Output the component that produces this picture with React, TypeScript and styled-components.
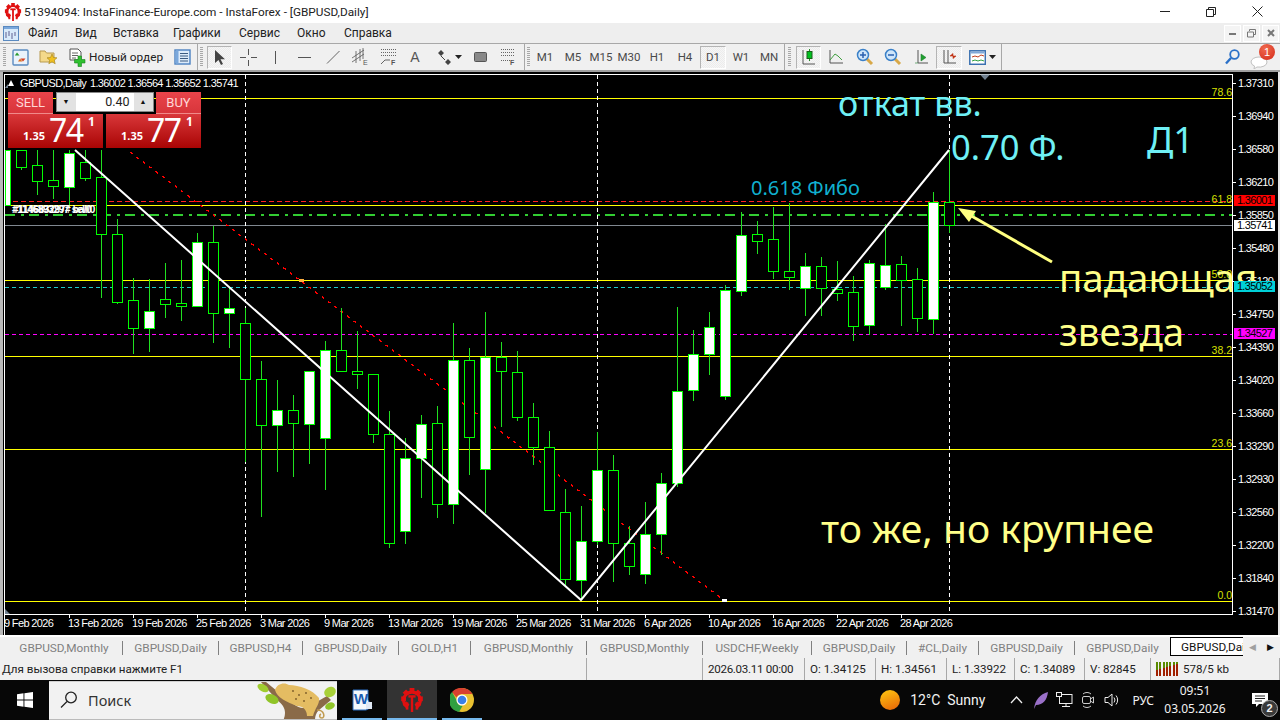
import React from "react";
import styled, { createGlobalStyle } from "styled-components";

const GlobalStyle = createGlobalStyle`
  html, body {
    margin: 0;
    width: 1280px;
    height: 720px;
    overflow: hidden;
    background: #f0f0f0;
    font-family: "Roboto", sans-serif;
  }
`;

const Page = styled.div`
  width: 1280px;
  height: 720px;
  display: flex;
  flex-direction: column;
`;

// Title bar
const TitleBar = styled.div`
  height: 23px;
  background: #fff;
  display: flex;
  align-items: center;
  padding-left: 4px;
  flex: none;
`;
const TitleText = styled.div`
  margin-left: 2px;
  font: 11.8px Roboto, sans-serif;
  color: #222;
  flex: 1;
`;
const WinButtons = styled.div`
  display: flex;
  width: 138px;
  height: 23px;
`;
const WinButton = styled.div`
  width: 46px;
  display: flex;
  align-items: center;
  justify-content: center;
`;

// Menu
const MenuBar = styled.div`
  height: 20px;
  background: #eeeeee;
  display: flex;
  align-items: center;
  flex: none;
  border-bottom: 1px solid #a8a8a8;
`;
const MenuIcon = styled.div`
  width: 28px;
  padding-left: 3px;
  box-sizing: border-box;
  display: flex;
`;
const MenuItem = styled.span<{ $w: number }>`
  width: ${(p) => p.$w}px;
  font: 12px Roboto, sans-serif;
  color: #222;
  flex: none;
`;
const MdiButtons = styled.div`
  margin-left: auto;
  margin-right: 1px;
  display: flex;
  gap: 2px;
`;
const MdiButton = styled.div`
  width: 15px;
  height: 15px;
  background: #f4f4f4;
  border: 1px solid #fff;
  display: flex;
  align-items: center;
  justify-content: center;
`;

// Toolbar
const ToolBar = styled.div`
  height: 28px;
  background: #f0f0f0;
  border-bottom: 2px solid #a0a0a0;
  display: flex;
  align-items: center;
  flex: none;
  padding-left: 3px;
  box-sizing: border-box;
`;
const Grip = styled.div<{ $gap: number }>`
  width: 3px;
  height: 20px;
  margin-right: ${(p) => p.$gap}px;
  flex: none;
  background: repeating-linear-gradient(to bottom, #a8a8a8 0 1px, transparent 1px 2px);
`;
const Divider = styled.div<{ $l: number; $r: number }>`
  width: 1px;
  height: 26px;
  background: #a8a8a8;
  margin: 0 ${(p) => p.$r}px 0 ${(p) => p.$l}px;
  flex: none;
`;
const ToolButton = styled.div<{ $w?: number; $on?: boolean }>`
  width: ${(p) => p.$w ?? 28}px;
  height: 23px;
  box-sizing: border-box;
  flex: none;
  display: flex;
  align-items: center;
  justify-content: center;
  font: 11.5px Roboto, sans-serif;
  color: #4a4a4a;
  gap: 3px;
  ${(p) =>
    p.$on
      ? `border: 1px solid #b4b4b4; border-right-color:#fff; border-bottom-color:#fff;
         background: repeating-conic-gradient(#f6f6f6 0 25%, #ececec 0 50%) 0 0 / 2px 2px;`
      : ""}
`;
const TimeFrameOn = styled(ToolButton)`
  margin: 0 1px;
`;
const OrderButton = styled(ToolButton)`
  justify-content: flex-start;
  padding-left: 5px;
`;
const OrderLabel = styled.span`
  font: 11.8px Roboto, sans-serif;
  color: #222;
`;
const TextTool = styled(ToolButton)`
  font: 14px "Liberation Sans", sans-serif;
  color: #555;
`;
const ToolbarEnd = styled.div`
  margin-left: auto;
  display: flex;
  align-items: center;
  gap: 10px;
  padding-right: 6px;
`;
const ChatWrap = styled.div`
  position: relative;
  width: 24px;
  height: 24px;
  display: flex;
  align-items: flex-end;
`;
const ChatBadge = styled.div`
  position: absolute;
  right: -1px;
  top: -1px;
  width: 16px;
  height: 16px;
  border-radius: 50%;
  background: radial-gradient(circle at 40% 30%, #f06a50, #d42a18);
  color: #fff;
  font: 11px/16px "Liberation Sans", sans-serif;
  text-align: center;
`;

// Chart
const ChartArea = styled.div`
  height: 563px;
  background: #000;
  position: relative;
  flex: none;
`;
const LeftEdge = styled.div`
  position: absolute;
  left: 0;
  top: 0;
  bottom: 0;
  width: 3px;
  background: #b8b8b8;
`;
const RightEdge = styled.div`
  position: absolute;
  right: 0;
  top: 0;
  bottom: 0;
  width: 2px;
  background: #e8e8e8;
`;
const BigNote = styled.div<{ $x: number; $y: number; $c: string; $s: number }>`
  position: absolute;
  left: ${(p) => p.$x}px;
  top: ${(p) => p.$y}px;
  color: ${(p) => p.$c};
  font: ${(p) => p.$s}px/1 "Noto Sans", sans-serif;
  white-space: nowrap;
`;
const PriceTag = styled.div<{ $y: number; $bg: string }>`
  position: absolute;
  left: 1234px;
  top: ${(p) => p.$y}px;
  width: 41px;
  height: 11px;
  background: ${(p) => p.$bg};
  color: #000;
  font: 11px/11px "Liberation Sans", sans-serif;
  letter-spacing: -0.65px;
  text-align: center;
`;

// One click trading panel
const TradePanel = styled.div`
  position: absolute;
  left: 8px;
  top: 20px;
  width: 193px;
  display: flex;
  flex-direction: column;
`;
const TradeTop = styled.div`
  background: linear-gradient(#e9444a, #d8353b);
  width: 45px;
  flex: none;
  color: #ffd7d7;
  font: 13px/21px Roboto, sans-serif;
  text-align: center;
  box-sizing: border-box;
  border-bottom: 1px solid #f08a8a;
  height: 22px;
`;
const TopRow = styled.div`
  display: flex;
  height: 22px;
  justify-content: space-between;
`;
const Spinner = styled.div`
  width: 98px;
  height: 20px;
  background: #d8d8d8;
  border: 1px solid #888;
  box-sizing: border-box;
  display: flex;
`;
const SpinArrow = styled.div`
  width: 19px;
  font-size: 7px;
  line-height: 18px;
  text-align: center;
  color: #111;
  background: #e2e2e2;
`;
const SpinValue = styled.div`
  flex: 1;
  background: #fff;
  color: #222;
  font: 12.5px/18px Roboto, sans-serif;
  text-align: right;
  padding-right: 4px;
`;
const PriceRow = styled.div`
  display: flex;
  gap: 3px;
`;
const PriceButton = styled.div`
  width: 95px;
  height: 34px;
  background: linear-gradient(#d9373a, #a90404);
  color: #fff;
  position: relative;
  font-family: "Noto Sans", sans-serif;
`;
const PriceSmall = styled.span`
  position: absolute;
  left: 15px;
  top: 15px;
  font-size: 11px;
  font-weight: 700;
  line-height: 14px;
`;
const PriceBig = styled.span`
  position: absolute;
  left: 41px;
  top: -3px;
  font-size: 32px;
  line-height: 38px;
  letter-spacing: -1.5px;
`;
const PriceSup = styled.span`
  position: absolute;
  left: 80px;
  top: 1px;
  font-size: 12px;
  line-height: 14px;
  font-weight: 700;
`;

// Tabs
const TabStrip = styled.div`
  height: 23px;
  box-sizing: border-box;
  background: #f0f0f0;
  border-top: 2px solid #fff;
  display: flex;
  align-items: center;
  position: relative;
  padding-left: 6px;
  flex: none;
  overflow: hidden;
`;
const Tab = styled.div<{ $w: number }>`
  width: ${(p) => p.$w}px;
  box-sizing: border-box;
  height: 14px;
  font: 11.8px/14px Roboto, sans-serif;
  color: #808080;
  border-right: 1px solid #808080;
  text-align: center;
  flex: none;
  white-space: nowrap;
`;
const ActiveTab = styled.div`
  position: absolute;
  left: 1170px;
  top: 0;
  width: 90px;
  height: 19px;
  background: #fff;
  border: 1px solid #000;
  border-right: 0;
  box-sizing: border-box;
  padding-left: 10px;
  font: 11.8px/18px Roboto, sans-serif;
  color: #111;
  white-space: nowrap;
  overflow: hidden;
`;
const TabArrows = styled.div`
  position: absolute;
  right: 0;
  top: 0;
  width: 37px;
  height: 20px;
  background: #f0f0f0;
  display: flex;
  align-items: center;
  justify-content: space-around;
  font-size: 9px;
`;
const ArrowGlyph = styled.span<{ $dim?: boolean }>`
  color: ${(p) => (p.$dim ? "#a0a0a0" : "#111")};
`;

// Status bar
const StatusBar = styled.div`
  height: 22px;
  background: #f0f0f0;
  display: flex;
  flex: none;
  font: 11.6px/22px Roboto, sans-serif;
  color: #222;
`;
const StatusCell = styled.div<{ $w: number }>`
  width: ${(p) => p.$w}px;
  flex: none;
  box-sizing: border-box;
  padding-left: 5px;
  border-right: 1px solid #a8a8a8;
  white-space: nowrap;
  display: flex;
  align-items: center;
  gap: 4px;
`;
const StatusFirst = styled(StatusCell)`
  padding-left: 2px;
`;
const StatusDate = styled(StatusCell)`
  letter-spacing: -0.3px;
`;

// Taskbar
const TaskBar = styled.div`
  height: 40px;
  background: #070707;
  display: flex;
  align-items: center;
  flex: none;
  color: #f2f2f2;
`;
const StartButton = styled.div`
  width: 49px;
  height: 40px;
  display: flex;
  align-items: center;
  justify-content: center;
`;
const SearchBox = styled.div`
  width: 288px;
  height: 39px;
  background: #f2f2f2;
  display: flex;
  align-items: center;
  padding-left: 11px;
  box-sizing: border-box;
  position: relative;
  border-top: 1px solid #d0d0d0;
  border-bottom: 1px solid #bbb;
  overflow: hidden;
`;
const SearchText = styled.span`
  margin-left: 10px;
  font: 14.5px "Noto Sans", sans-serif;
  color: #333;
`;
const Leopard = styled.div`
  position: absolute;
  right: 0;
  top: 0;
  height: 39px;
`;
const TaskApp = styled.div<{ $on?: boolean }>`
  width: 50px;
  height: 40px;
  box-sizing: border-box;
  display: flex;
  align-items: center;
  justify-content: center;
  position: relative;
  background: ${(p) => (p.$on ? "#333" : "transparent")};
  &::after {
    content: "";
    position: absolute;
    left: ${(p) => (p.$on ? 0 : 5)}px;
    right: ${(p) => (p.$on ? 0 : 5)}px;
    bottom: 0;
    height: 2px;
    background: #76b9ed;
  }
`;
const Tray = styled.div`
  margin-left: auto;
  display: flex;
  align-items: center;
  height: 40px;
`;
const Weather = styled.div`
  display: flex;
  align-items: center;
  gap: 10px;
  font: 14px Roboto, sans-serif;
  margin-right: 19px;
`;
const TrayIcon = styled.div`
  width: 24px;
  display: flex;
  justify-content: center;
`;
const Lang = styled.div`
  font: 12px "Noto Sans", sans-serif;
  margin: 0 10px 0 8px;
`;
const Clock = styled.div`
  width: 62px;
  font: 12px/18px "Noto Sans", sans-serif;
  text-align: center;
  margin-right: 14px;
`;
const Notify = styled.div`
  width: 40px;
  position: relative;
  display: flex;
  justify-content: center;
`;
const NotifyBadge = styled.div`
  position: absolute;
  left: 21px;
  top: 7px;
  width: 15px;
  height: 15px;
  border-radius: 50%;
  border: 1px solid #aaa;
  background: #3a3a3a;
  font: bold 11px/15px "Liberation Sans", sans-serif;
  text-align: center;
`;

// [x center, wick top, wick bottom, body top, body bottom, bullish]
type Candle = [number, number, number, number, number, number];
const candles: Candle[] = [
  [21, 150, 170, 150, 167, 0], [37, 150, 195, 165, 181, 0], [53, 150, 199, 180, 186, 0],
  [69, 150, 207, 153, 187, 1], [85, 150, 181, 162, 178, 0], [101, 150, 298, 177, 234, 0],
  [117, 219, 304, 234, 302, 0], [133, 278, 354, 300, 328, 0], [149, 279, 352, 311, 328, 1],
  [165, 263, 318, 299, 304, 0], [181, 260, 321, 303, 306, 0], [197, 233, 306, 242, 306, 1],
  [213, 226, 343, 242, 313, 0], [229, 287, 348, 308, 313, 1], [245, 308, 462, 323, 379, 0],
  [261, 361, 517, 379, 425, 0], [277, 380, 472, 410, 425, 1], [293, 395, 477, 410, 423, 0],
  [309, 371, 464, 371, 424, 1], [325, 341, 490, 350, 438, 1], [341, 308, 372, 350, 371, 0],
  [357, 331, 389, 371, 374, 0], [373, 374, 443, 374, 434, 0], [389, 411, 548, 434, 543, 0],
  [405, 438, 544, 458, 531, 1], [421, 415, 498, 424, 458, 1], [437, 406, 518, 423, 504, 0],
  [453, 323, 524, 360, 504, 1], [469, 348, 475, 360, 437, 0], [485, 312, 513, 357, 469, 1],
  [501, 342, 427, 357, 371, 0], [517, 351, 421, 372, 417, 0], [533, 403, 465, 417, 447, 0],
  [549, 431, 510, 447, 510, 0], [565, 489, 586, 512, 579, 0], [581, 506, 600, 541, 580, 1],
  [597, 432, 545, 470, 541, 1], [613, 455, 582, 470, 543, 0], [629, 526, 575, 543, 566, 0],
  [645, 502, 584, 534, 574, 1], [661, 473, 555, 483, 534, 1], [677, 307, 487, 391, 483, 1],
  [693, 330, 401, 354, 390, 1], [709, 312, 375, 327, 354, 1], [725, 285, 400, 290, 396, 1],
  [741, 212, 296, 235, 291, 1], [757, 221, 254, 234, 241, 0], [773, 207, 279, 239, 271, 0],
  [789, 203, 290, 271, 277, 0], [805, 253, 316, 266, 288, 1], [821, 257, 316, 266, 288, 0],
  [837, 261, 301, 289, 293, 0], [853, 276, 341, 292, 326, 0], [869, 260, 335, 263, 325, 1],
  [885, 224, 290, 265, 287, 1], [901, 256, 326, 264, 280, 0], [917, 268, 332, 279, 318, 0],
  [933, 192, 334, 202, 319, 1], [949, 150, 233, 202, 225, 0],
];

const prices: [string, number][] = [
  ["1.37310", 83], ["1.36940", 116], ["1.36580", 149], ["1.36210", 182], ["1.35850", 215],
  ["1.35480", 248], ["1.35120", 281], ["1.34750", 314], ["1.34390", 347], ["1.34020", 380],
  ["1.33660", 413], ["1.33290", 446], ["1.32930", 479], ["1.32560", 512], ["1.32200", 545],
  ["1.31840", 578], ["1.31470", 611],
];

const dates: [string, number][] = [
  ["9 Feb 2026", 5], ["13 Feb 2026", 69], ["19 Feb 2026", 133], ["25 Feb 2026", 197],
  ["3 Mar 2026", 261], ["9 Mar 2026", 325], ["13 Mar 2026", 389], ["19 Mar 2026", 453],
  ["25 Mar 2026", 517], ["31 Mar 2026", 581], ["6 Apr 2026", 645], ["10 Apr 2026", 709],
  ["16 Apr 2026", 773], ["22 Apr 2026", 837], ["28 Apr 2026", 901],
];

const fibo: [string, number][] = [
  ["78.6", 98], ["61.8", 205], ["50.0", 280], ["38.2", 356], ["23.6", 449], ["0.0", 601],
];

const tabs: [string, number][] = [
  ["GBPUSD,Monthly", 117], ["GBPUSD,Daily", 96], ["GBPUSD,H4", 84], ["GBPUSD,Daily", 96],
  ["GOLD,H1", 72], ["GBPUSD,Monthly", 116], ["GBPUSD,Monthly", 116], ["USDCHF,Weekly", 109],
  ["GBPUSD,Daily", 95], ["#CL,Daily", 72], ["GBPUSD,Daily", 96], ["GBPUSD,Daily", 96],
];

const menus: [string, number][] = [
  ["Файл", 47], ["Вид", 38], ["Вставка", 60], ["Графики", 66], ["Сервис", 58], ["Окно", 47], ["Справка", 60],
];

const frames = ["M1", "M5", "M15", "M30", "H1", "H4", "D1", "W1", "MN"];

const ChartSvg = () => (
  <svg width={1280} height={563} viewBox="0 72 1280 563" style={{ display: "block" }}>
    <g shapeRendering="crispEdges">
      <path d="M4.5 635V74.5H1232.5V614.5H4.5" fill="none" stroke="#fff" />
      {fibo.map(([, y]) => (
        <line key={y} x1={5} x2={1232} y1={y + 0.5} y2={y + 0.5} stroke="#ffff00" />
      ))}
      <line x1={5} x2={1232} y1={201.5} y2={201.5} stroke="#ff2020" strokeDasharray="5 3" />
      <line x1={5} x2={1232} y1={225.5} y2={225.5} stroke="#808890" />
      <line x1={5} x2={1232} y1={287.5} y2={287.5} stroke="#20c8c8" strokeDasharray="4 3" />
      <line x1={5} x2={1232} y1={334.5} y2={334.5} stroke="#ff00ff" strokeDasharray="4 3" />
      <line x1={5} x2={1232} y1={215} y2={215} stroke="#32cd32" strokeWidth={2} strokeDasharray="10 6 3 5" />
      {[245, 597, 949].map((x) => (
        <line key={x} x1={x + 0.5} x2={x + 0.5} y1={75} y2={614} stroke="#fff" strokeDasharray="4 3" />
      ))}
      {prices.map(([, y]) => (
        <line key={y} x1={1232} x2={1236} y1={y + 0.5} y2={y + 0.5} stroke="#fff" />
      ))}
      {dates.slice(1).map(([, x]) => (
        <line key={x} x1={x + 0.5} x2={x + 0.5} y1={614} y2={618} stroke="#fff" />
      ))}
      <line x1={130} y1={152} x2={725} y2={601} stroke="#ff0000" strokeWidth={1.4} strokeDasharray="3 5" />
      <rect x={722} y={599} width={5} height={3} fill="#fff" />
      <rect x={299} y={279} width={5} height={3} fill="#ffb040" />
      <rect x={5.5} y={150} width={5} height={55} fill="#fff" stroke="#00ff00" />
      {candles.map(([x, wt, wb, bt, bb, up]) => (
        <g key={x}>
          <line x1={x + 0.5} x2={x + 0.5} y1={wt} y2={wb} stroke="#20e020" />
          <rect x={x - 4.5} y={bt + 0.5} width={10} height={bb - bt} fill={up ? "#fff" : "#000"} stroke="#00ff00" />
        </g>
      ))}
    </g>
    <polyline points="75,150 581,600 949,150" fill="none" stroke="#fff" strokeWidth={2} />
    <path d="M1052 262L968 214" stroke="#ffff80" strokeWidth={3} />
    <path d="M958 208L976 211L969 222Z" fill="#ffff80" />
    <path d="M980 74.500H990L985 80Z" fill="#708090" />
    <path d="M5 88L8 84V88Z M5 609L10 614H5Z" fill="#708090" />
    <path d="M8 86L11 80L14 86Z" fill="#fff" />
    <g fill="#fff" fontFamily="Liberation Sans, sans-serif" fontSize={11} letterSpacing={-0.65}>
      <text x={20} y={87}>GBPUSD,Daily</text>
      <text x={90} y={87}>1.36002 1.36564 1.35652 1.35741</text>
      {prices.map(([t, y]) => (
        <text key={t} x={1238} y={y + 4}>{t}</text>
      ))}
      {dates.map(([t, x]) => (
        <text key={t} x={x - 1} y={627}>{t}</text>
      ))}
    </g>
    <g fill="#fff" fontFamily="Liberation Sans, sans-serif" fontSize={10} fontWeight={700} letterSpacing={-0.3}>
      <text x={12} y={213}>#1146893297 sell/0</text>
      <text x={13} y={213}>#114683297# ba/0</text>
    </g>
    <g fill="#d8e000" fontFamily="Liberation Sans, sans-serif" fontSize={10.500} textAnchor="end">
      {fibo.map(([t, y]) => (
        <text key={t} x={1232} y={y - 2}>{t}</text>
      ))}
    </g>
  </svg>
);

const Logo = ({ size = 18 }: { size?: number }) => (
  <svg width={size} height={size} viewBox="0 0 20 20">
    <g fill="#e01010">
      {[0, 45, 90, 135, 225, 270, 315].map((a) => (
        <rect key={a} x={8} y={0} width={4} height={4} transform={`rotate(${a} 10 9)`} />
      ))}
      <rect x={9} y={7} width={2} height={13} />
      <rect x={4.800} y={12} width={2.200} height={6} />
      <rect x={13} y={12} width={2.200} height={6} />
      <rect x={7} y={6} width={6} height={2} />
    </g>
    <path d="M4 14A7 7 0 1 1 16 14" fill="none" stroke="#e01010" strokeWidth={2.600} />
  </svg>
);

const IconNewChart = () => (
  <svg width={17} height={17} viewBox="0 0 17 17">
    <rect x={1} y={1} width={15} height={15} rx={1} fill="#eaf2fb" stroke="#5a8ac0" strokeWidth={1.400} />
    <path d="M5 3.500l2.500 3H2.800z" fill="#2a9a30" />
    <path d="M11 12.500l-2.500-3h5z" fill="#d84020" />
    <path d="M8 9.500l2.500 3H6z" fill="#e07020" />
  </svg>
);
const IconFolderStar = () => (
  <svg width={19} height={18} viewBox="0 0 19 18">
    <path d="M1 3h5l1.500 2H15v9H1z" fill="#f4d98a" stroke="#b89a50" />
    <path d="M13 6l1.500 3.500 3.500.3-2.700 2.400.9 3.600-3.200-2-3.200 2 .9-3.600L8 9.800l3.500-.3z" fill="#f0c020" stroke="#a08020" strokeWidth={0.600} />
  </svg>
);
const IconNewOrder = () => (
  <svg width={17} height={19} viewBox="0 0 17 19">
    <path d="M1 1h8l3 3v8H1z" fill="#fff" stroke="#555" />
    <path d="M3 5h6M3 7.500h6M3 10h4" stroke="#666" />
    <path d="M9 8h3.500v3.500H16V15h-3.500v3.500H9V15H5.500v-3.500H9z" fill="#30c030" stroke="#1a8020" strokeWidth={0.600} />
  </svg>
);
const IconNavigator = () => (
  <svg width={17} height={16} viewBox="0 0 17 16">
    <rect x={1} y={1} width={15} height={14} fill="#dcebfa" stroke="#4a80c0" strokeWidth={1.400} />
    <rect x={1.500} y={1.500} width={3} height={13} fill="#7aa8dc" />
    <path d="M6 4.500h8M6 7h8M6 9.500h8M6 12h8" stroke="#3a5a80" />
  </svg>
);
const IconCursor = () => (
  <svg width={14} height={17} viewBox="0 0 14 17">
    <path d="M2 1v13l3.500-3 2.500 5 2-1-2.500-4.800H12z" fill="#444" />
  </svg>
);
const IconCross = () => (
  <svg width={17} height={17} viewBox="0 0 17 17" shapeRendering="crispEdges">
    <path d="M0 8.500h6M11 8.500h6M8.500 0v6M8.500 11v6" stroke="#555" />
  </svg>
);
const IconV = () => (
  <svg width={3} height={13} viewBox="0 0 3 13"><path d="M1.500 0v13" stroke="#555" /></svg>
);
const IconH = () => (
  <svg width={13} height={3} viewBox="0 0 13 3"><path d="M0 1.500h13" stroke="#555" /></svg>
);
const IconD = () => (
  <svg width={14} height={14} viewBox="0 0 14 14"><path d="M1 13.500L13.500 1" stroke="#666" /></svg>
);
const IconChannel = () => (
  <svg width={17} height={18} viewBox="0 0 17 18" stroke="#555" fill="none">
    <path d="M0 10L12 2M0 14L12 6M4 3v12M8 1v12M11 0v11" strokeWidth={0.800} />
    <text x={11} y={17} fontSize={7} stroke="none" fill="#555" fontFamily="Liberation Sans">E</text>
  </svg>
);
const IconFibo = () => (
  <svg width={17} height={18} viewBox="0 0 17 18" fill="none">
    <path d="M1 1.500h15M1 4.500h15M1 7.500h15" stroke="#666" strokeDasharray="1 1" />
    <path d="M1 16l4-4h5" stroke="#666" />
    <text x={11} y={17} fontSize={7} fontWeight={700} fill="#555" fontFamily="Liberation Sans">F</text>
  </svg>
);
const IconArrows = () => (
  <svg width={15} height={15} viewBox="0 0 15 15" fill="#444">
    <path d="M4 0l3 3-3 3-3-3zM11 9l3 3-3 3-3-3z" />
    <path d="M4 6l4 4" stroke="#444" />
  </svg>
);
const IconCaret = () => (
  <svg width={7} height={4} viewBox="0 0 7 4"><path d="M0 0h7L3.500 4z" fill="#222" /></svg>
);
const IconRect = () => (
  <svg width={13} height={10} viewBox="0 0 13 10">
    <rect x={0.500} y={0.500} width={12} height={9} rx={1} fill="#888" stroke="#555" />
  </svg>
);
const IconDotsF = () => (
  <svg width={15} height={18} viewBox="0 0 15 18" fill="none">
    <path d="M1 1.500h13M1 4.500h13M1 7.500h13M1 12.500h9" stroke="#666" strokeDasharray="1 1" />
    <text x={10} y={17} fontSize={7} fontWeight={700} fill="#555" fontFamily="Liberation Sans">F</text>
  </svg>
);
const IconCandle = () => (
  <svg width={15} height={17} viewBox="0 0 15 17" fill="none">
    <path d="M2 1v14h12" stroke="#555" />
    <path d="M8.500 0v12" stroke="#2a8a2a" />
    <rect x={6} y={2.500} width={5} height={7} fill="#00c020" stroke="#186018" />
  </svg>
);
const IconLine = () => (
  <svg width={16} height={16} viewBox="0 0 16 16" fill="none">
    <path d="M2 1v13h13" stroke="#555" />
    <path d="M2 11l5-6 3 2 4 4" stroke="#40a040" />
  </svg>
);
const IconZoom = ({ plus }: { plus?: boolean }) => (
  <svg width={18} height={18} viewBox="0 0 18 18" fill="none">
    <path d="M11 11l5 5" stroke="#d8a848" strokeWidth={3} />
    <circle cx={7} cy={7} r={5.500} fill="#cfe6fa" stroke="#3a80c8" strokeWidth={1.500} />
    <path d={plus ? "M4 7h6M7 4v6" : "M4 7h6"} stroke="#2a60b0" strokeWidth={1.500} />
  </svg>
);
const IconAutoScroll = () => (
  <svg width={15} height={16} viewBox="0 0 15 16" fill="none">
    <path d="M4 1v13h10" stroke="#555" />
    <path d="M1 14h3M7 5l5 3.500-5 3.500z" fill="#20a030" stroke="#208030" strokeWidth={0.600} />
  </svg>
);
const IconShift = () => (
  <svg width={15} height={16} viewBox="0 0 15 16" fill="none">
    <path d="M2 1v13h12M6 1v13" stroke="#555" />
    <path d="M14 7H8l3-2.500v5z" fill="#c03010" stroke="#c03010" strokeWidth={0.600} />
  </svg>
);
const IconTemplate = () => (
  <svg width={17} height={15} viewBox="0 0 17 15" fill="none">
    <rect x={0.800} y={0.800} width={15.500} height={13.500} fill="#fff" stroke="#3a70b0" strokeWidth={1.500} />
    <rect x={1.500} y={1.500} width={14} height={2} fill="#80a8d8" />
    <path d="M3 7l3-1 3 1 3-2 3 1" stroke="#c04020" />
    <path d="M3 11l3-1 3 1 3-1 3 1" stroke="#30a040" />
  </svg>
);
const IconSearchBlue = () => (
  <svg width={15} height={16} viewBox="0 0 15 16" fill="none">
    <circle cx={9.500} cy={5.500} r={4.300} stroke="#2a70c8" strokeWidth={1.800} />
    <path d="M6 9l-5 5.500" stroke="#2a70c8" strokeWidth={2.400} />
  </svg>
);
const IconBubble = () => (
  <svg width={18} height={13} viewBox="0 0 18 13">
    <path d="M1 6a8 5 0 0 1 16 0a8 5 0 0 1-10 5l-3 2 .5-3A5 5 0 0 1 1 6z" fill="#fff" stroke="#c0c0c0" />
  </svg>
);
const IconMenuChart = () => (
  <svg width={16} height={15} viewBox="0 0 16 15" fill="none">
    <rect x={0.500} y={0.500} width={15} height={14} fill="#d8eafa" stroke="#5a8ac0" />
    <rect x={1} y={1} width={14} height={2} fill="#7aa8dc" />
    <path d="M3 6v6M6 5v5M9 7v6M12 6v4" stroke="#606090" />
  </svg>
);
const IconBars = () => (
  <svg width={23} height={14} viewBox="0 0 23 14" shapeRendering="crispEdges">
    {Array.from({ length: 7 }).map((_, i) => (
      <g key={i}>
        <rect x={i * 3.300} y={0} width={2} height={8 - i} fill="#5a8a00" />
        <rect x={i * 3.300} y={8 - i} width={2} height={6 + i} fill="#a02000" />
      </g>
    ))}
  </svg>
);
const IconWindows = () => (
  <svg width={16} height={16} viewBox="0 0 16 16" fill="#fff">
    <path d="M0 2.200L6.500 1.300V7.600H0zM7.400 1.200L16 0V7.600H7.400zM0 8.400H6.500V14.700L0 13.800zM7.400 8.400H16V16L7.400 14.800z" />
  </svg>
);
const IconLens = () => (
  <svg width={18} height={18} viewBox="0 0 18 18" fill="none" stroke="#222" strokeWidth={1.300}>
    <circle cx={11} cy={6.500} r={5.300} />
    <path d="M7 10.500L1 16.500" />
  </svg>
);
const LeopardArt = () => (
  <svg width={80} height={39} viewBox="0 0 80 39">
    <path d="M26 39C30 30 28 24 20 18L4 0H9L26 14C34 20 40 26 46 26L56 22L70 14L74 18L62 28C58 32 58 36 58 39Z" fill="#8a6a48" />
    <ellipse cx={6} cy={6} rx={6} ry={3.500} transform="rotate(30 6 6)" fill="#a0cc30" />
    <ellipse cx={15} cy={17} rx={7} ry={4.500} transform="rotate(25 15 17)" fill="#90c428" />
    <ellipse cx={73} cy={10} rx={6} ry={5} transform="rotate(-30 73 10)" fill="#a8d038" />
    <ellipse cx={73} cy={24} rx={5} ry={3.500} transform="rotate(-20 73 24)" fill="#90c428" />
    <path d="M18 8C20 1 28 0 32 3C42 3 56 8 62 16C63 22 58 26 56 34H50C50 28 46 24 40 24C30 20 20 16 18 8Z" fill="#e4bc62" />
    <g fill="#7a5a28">
      <circle cx={36} cy={9} r={0.900} /><circle cx={42} cy={13} r={0.900} /><circle cx={49} cy={11} r={0.900} />
      <circle cx={54} cy={16} r={0.900} /><circle cx={47} cy={19} r={0.900} /><circle cx={39} cy={17} r={0.900} />
    </g>
    <path d="M60 28c8 0 8 8 5 8c-3 0-3-3-1-4" stroke="#c09a50" strokeWidth={1.500} fill="none" />
  </svg>
);
const IconWord = () => (
  <svg width={22} height={24} viewBox="0 0 22 24">
    <path d="M2 2h15v10l4 7-6 3H2z" fill="#f4f8fc" stroke="#2a6cc0" />
    <text x={3} y={16} fontSize={15} fontWeight={700} fill="#1a5cb0" fontFamily="Liberation Sans">W</text>
    <rect x={15} y={14} width={6} height={7} fill="#e0e8f4" />
  </svg>
);
const IconChrome = () => (
  <svg width={24} height={24} viewBox="0 0 24 24">
    <circle cx={12} cy={12} r={12} fill="#e8c030" />
    <path d="M12 0a12 12 0 0 1 10.400 6H12a6 6 0 0 0-5.500 3.500L2 4A12 12 0 0 1 12 0z" fill="#d84030" />
    <path d="M2 4l4.500 8a6 6 0 0 0 6 5.900L9 24A12 12 0 0 1 2 4z" fill="#30a040" />
    <circle cx={12} cy={12} r={5.500} fill="#fff" />
    <circle cx={12} cy={12} r={4.300} fill="#3a80e8" />
  </svg>
);
const IconSun = () => (
  <svg width={20} height={20} viewBox="0 0 21 21">
    <defs>
      <linearGradient id="sunFill" x1="0.300" y1="0" x2="0.700" y2="1">
        <stop offset="0" stopColor="#fdc010" />
        <stop offset="1" stopColor="#e86a08" />
      </linearGradient>
    </defs>
    <circle cx={10.500} cy={10.500} r={10.500} fill="url(#sunFill)" />
  </svg>
);
const TrayCaret = () => (
  <svg width={13} height={8} viewBox="0 0 13 8" fill="none"><path d="M1 7l5.500-6L12 7" stroke="#eee" strokeWidth={1.300} /></svg>
);
const TrayFeather = () => (
  <svg width={15} height={17} viewBox="0 0 15 17"><path d="M1 17C2 8 7 2 15 0C14 8 10 13 3 13z" fill="#9a70c8" /></svg>
);
const TrayNet = () => (
  <svg width={17} height={16} viewBox="0 0 17 16" fill="none" stroke="#eee">
    <rect x={3.500} y={2.500} width={12.500} height={9} />
    <rect x={0.500} y={0.500} width={5} height={4} fill="#111" />
    <path d="M10 11.500v3M6 14.500h8" />
  </svg>
);
const TrayCam = () => (
  <svg width={14} height={16} viewBox="0 0 14 16" fill="none" stroke="#ccc">
    <rect x={1.500} y={4.500} width={8} height={7} rx={1.500} />
    <path d="M9.500 7l3-2v6l-3-2M2 2a6 6 0 0 1 8 0M2 14a6 6 0 0 0 8 0" />
  </svg>
);
const TrayVolume = () => (
  <svg width={16} height={14} viewBox="0 0 16 14" fill="none" stroke="#eee">
    <path d="M1 4.500h3l4-3.500v12l-4-3.500H1z" />
    <path d="M10 4.500a4 4 0 0 1 0 5M12 2.500a7 7 0 0 1 0 9" />
  </svg>
);
const TrayMessage = () => (
  <svg width={16} height={15} viewBox="0 0 16 15">
    <path d="M0 0h16v11H7l-3 3v-3H0z" fill="#fff" />
    <path d="M3 3h10M3 5.500h10M3 8h7" stroke="#222" />
  </svg>
);

const App: React.FC = () => (
  <Page>
    <GlobalStyle />
    <TitleBar>
      <Logo />
      <TitleText>51394094: InstaFinance-Europe.com - InstaForex - [GBPUSD,Daily]</TitleText>
      <WinButtons>
        <WinButton>
          <svg width={10} height={1}><rect width={10} height={1} fill="#222" /></svg>
        </WinButton>
        <WinButton>
          <svg width={10} height={10} fill="none" stroke="#222"><path d="M2.500 2.500V.5h7v7h-2M.5 2.500h7v7h-7z" /></svg>
        </WinButton>
        <WinButton>
          <svg width={11} height={11} stroke="#222"><path d="M.5.5l10 10M10.500.5l-10 10" /></svg>
        </WinButton>
      </WinButtons>
    </TitleBar>
    <MenuBar>
      <MenuIcon><IconMenuChart /></MenuIcon>
      {menus.map(([m, w]) => (
        <MenuItem key={m} $w={w}>{m}</MenuItem>
      ))}
      <MdiButtons>
        <MdiButton><svg width={7} height={3}><rect y={1} width={7} height={2} fill="#777" /></svg></MdiButton>
        <MdiButton><svg width={9} height={9} fill="none" stroke="#777"><path d="M2.500 2V.5h6v5H7M.5 3h6v5h-6z" /></svg></MdiButton>
        <MdiButton><svg width={8} height={8} stroke="#777" strokeWidth={2}><path d="M1 1l6 6M7 1L1 7" /></svg></MdiButton>
      </MdiButtons>
    </MenuBar>
    <ToolBar>
      <Grip $gap={2} />
      <ToolButton $w={24}><IconNewChart /></ToolButton>
      <ToolButton $w={32}><IconFolderStar /></ToolButton>
      <OrderButton $w={105}><IconNewOrder /><OrderLabel>Новый ордер</OrderLabel></OrderButton>
      <ToolButton $w={26}><IconNavigator /></ToolButton>
      <Divider $l={2} $r={2} />
      <Grip $gap={4} />
      <ToolButton $w={25} $on><IconCursor /></ToolButton>
      <ToolButton $w={32}><IconCross /></ToolButton>
      <ToolButton $w={22}><IconV /></ToolButton>
      <ToolButton $w={36}><IconH /></ToolButton>
      <ToolButton $w={22}><IconD /></ToolButton>
      <ToolButton $w={32}><IconChannel /></ToolButton>
      <ToolButton $w={24}><IconFibo /></ToolButton>
      <TextTool $w={30}>A</TextTool>
      <ToolButton $w={38}><IconArrows /><IconCaret /></ToolButton>
      <ToolButton $w={24}><IconRect /></ToolButton>
      <ToolButton $w={30}><IconDotsF /></ToolButton>
      <Divider $l={2} $r={2} />
      <Grip $gap={1} />
      {frames.map((f) =>
        f === "D1" ? (
          <TimeFrameOn key={f} $w={26} $on>{f}</TimeFrameOn>
        ) : (
          <ToolButton key={f}>{f}</ToolButton>
        )
      )}
      <Divider $l={1} $r={3} />
      <Grip $gap={5} />
      <ToolButton $w={25} $on><IconCandle /></ToolButton>
      <ToolButton $w={30}><IconLine /></ToolButton>
      <ToolButton><IconZoom plus /></ToolButton>
      <ToolButton><IconZoom /></ToolButton>
      <ToolButton><IconAutoScroll /></ToolButton>
      <TimeFrameOn $w={26} $on><IconShift /></TimeFrameOn>
      <ToolButton $w={38}><IconTemplate /><IconCaret /></ToolButton>
      <Divider $l={0} $r={0} />
      <ToolbarEnd>
        <IconSearchBlue />
        <ChatWrap>
          <IconBubble />
          <ChatBadge>1</ChatBadge>
        </ChatWrap>
      </ToolbarEnd>
    </ToolBar>
    <ChartArea>
      <ChartSvg />
      <LeftEdge />
      <RightEdge />
      <TradePanel>
        <TopRow>
          <TradeTop>SELL</TradeTop>
          <Spinner>
            <SpinArrow>▼</SpinArrow>
            <SpinValue>0.40</SpinValue>
            <SpinArrow>▲</SpinArrow>
          </Spinner>
          <TradeTop>BUY</TradeTop>
        </TopRow>
        <PriceRow>
          <PriceButton>
            <PriceSmall>1.35</PriceSmall>
            <PriceBig>74</PriceBig>
            <PriceSup>1</PriceSup>
          </PriceButton>
          <PriceButton>
            <PriceSmall>1.35</PriceSmall>
            <PriceBig>77</PriceBig>
            <PriceSup>1</PriceSup>
          </PriceButton>
        </PriceRow>
      </TradePanel>
      <BigNote $x={838} $y={14} $c="#6ff0f5" $s={34}>откат вв.</BigNote>
      <BigNote $x={951} $y={58} $c="#6ff0f5" $s={34.500}>0.70 Ф.</BigNote>
      <BigNote $x={1147} $y={50} $c="#6ff0f5" $s={36}>Д1</BigNote>
      <BigNote $x={751} $y={106} $c="#10b0d0" $s={20}>0.618 Фибо</BigNote>
      <BigNote $x={1059} $y={186} $c="#ffff88" $s={38.500}>падающая</BigNote>
      <BigNote $x={1059} $y={240} $c="#ffff88" $s={38.500}>звезда</BigNote>
      <BigNote $x={821} $y={436} $c="#ffff88" $s={39}>то же, но крупнее</BigNote>
      <PriceTag $y={123} $bg="#ff0000">1.36001</PriceTag>
      <PriceTag $y={148} $bg="#ffffff">1.35741</PriceTag>
      <PriceTag $y={209} $bg="#00d0d8">1.35052</PriceTag>
      <PriceTag $y={256} $bg="#ff00ff">1.34527</PriceTag>
    </ChartArea>
    <TabStrip>
      {tabs.map(([t, w], i) => (
        <Tab key={i} $w={w}>{t}</Tab>
      ))}
      <ActiveTab>GBPUSD,Daily</ActiveTab>
      <TabArrows>
        <ArrowGlyph $dim>◀</ArrowGlyph>
        <ArrowGlyph>▶</ArrowGlyph>
      </TabArrows>
    </TabStrip>
    <StatusBar>
      <StatusFirst $w={587}>Для вызова справки нажмите F1</StatusFirst>
      <StatusCell $w={116} />
      <StatusDate $w={102}>2026.03.11 00:00</StatusDate>
      <StatusCell $w={71}>O: 1.34125</StatusCell>
      <StatusCell $w={71}>H: 1.34561</StatusCell>
      <StatusCell $w={68}>L: 1.33922</StatusCell>
      <StatusCell $w={70}>C: 1.34089</StatusCell>
      <StatusCell $w={66}>V: 82845</StatusCell>
      <StatusCell $w={129}><IconBars />578/5 kb</StatusCell>
    </StatusBar>
    <TaskBar>
      <StartButton><IconWindows /></StartButton>
      <SearchBox>
        <IconLens />
        <SearchText>Поиск</SearchText>
        <Leopard><LeopardArt /></Leopard>
      </SearchBox>
      <TaskApp><IconWord /></TaskApp>
      <TaskApp $on><Logo size={24} /></TaskApp>
      <TaskApp><IconChrome /></TaskApp>
      <Tray>
        <Weather><IconSun /><span>12°C&nbsp;&nbsp;Sunny</span></Weather>
        <TrayIcon><TrayCaret /></TrayIcon>
        <TrayIcon><TrayFeather /></TrayIcon>
        <TrayIcon><TrayNet /></TrayIcon>
        <TrayIcon><TrayCam /></TrayIcon>
        <TrayIcon><TrayVolume /></TrayIcon>
        <Lang>РУС</Lang>
        <Clock>09:51<br />03.05.2026</Clock>
        <Notify>
          <TrayMessage />
          <NotifyBadge>2</NotifyBadge>
        </Notify>
      </Tray>
    </TaskBar>
  </Page>
);

export default App;
